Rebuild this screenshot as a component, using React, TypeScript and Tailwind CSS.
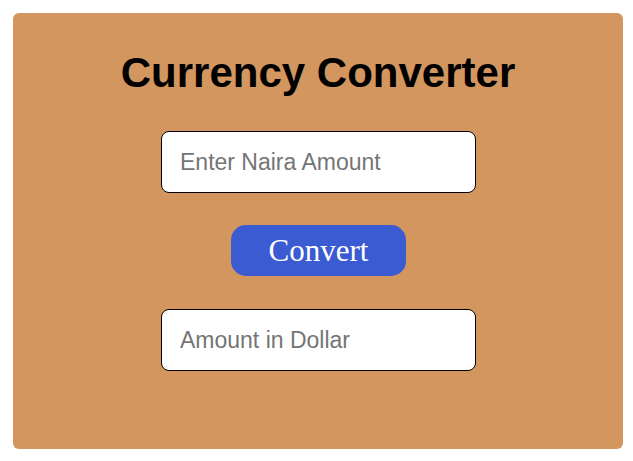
import React from "react";

export default function App() {
  return (
    <div className="w-[633px] h-[461px] bg-white pt-[13px] pl-[13px]">
      <div className="w-[610px] h-[436px] bg-[#d3965f] rounded-[6px] flex flex-col items-center pt-[36px]">
        <h1 className="text-[42px] font-bold text-black leading-[48px] h-[48px] font-['Liberation_Sans',Arial,sans-serif]">
          Currency Converter
        </h1>
        <input
          type="text"
          placeholder="Enter Naira Amount"
          className="mt-[34px] ml-[1px] w-[315px] h-[62px] bg-white border border-black rounded-[8px] pl-[18px] text-[23px] font-['Liberation_Sans',Arial,sans-serif] placeholder:text-[#757575] outline-none"
        />
        <button className="mt-[32px] ml-[1px] w-[175px] h-[51px] bg-[#3a5bd1] rounded-[15px] text-white text-[31px] font-['Liberation_Serif','Times_New_Roman',serif] leading-none">
          Convert
        </button>
        <input
          type="text"
          placeholder="Amount in Dollar"
          className="mt-[33px] ml-[1px] w-[315px] h-[62px] bg-white border border-black rounded-[8px] pl-[18px] text-[23px] font-['Liberation_Sans',Arial,sans-serif] placeholder:text-[#757575] outline-none"
        />
      </div>
    </div>
  );
}
